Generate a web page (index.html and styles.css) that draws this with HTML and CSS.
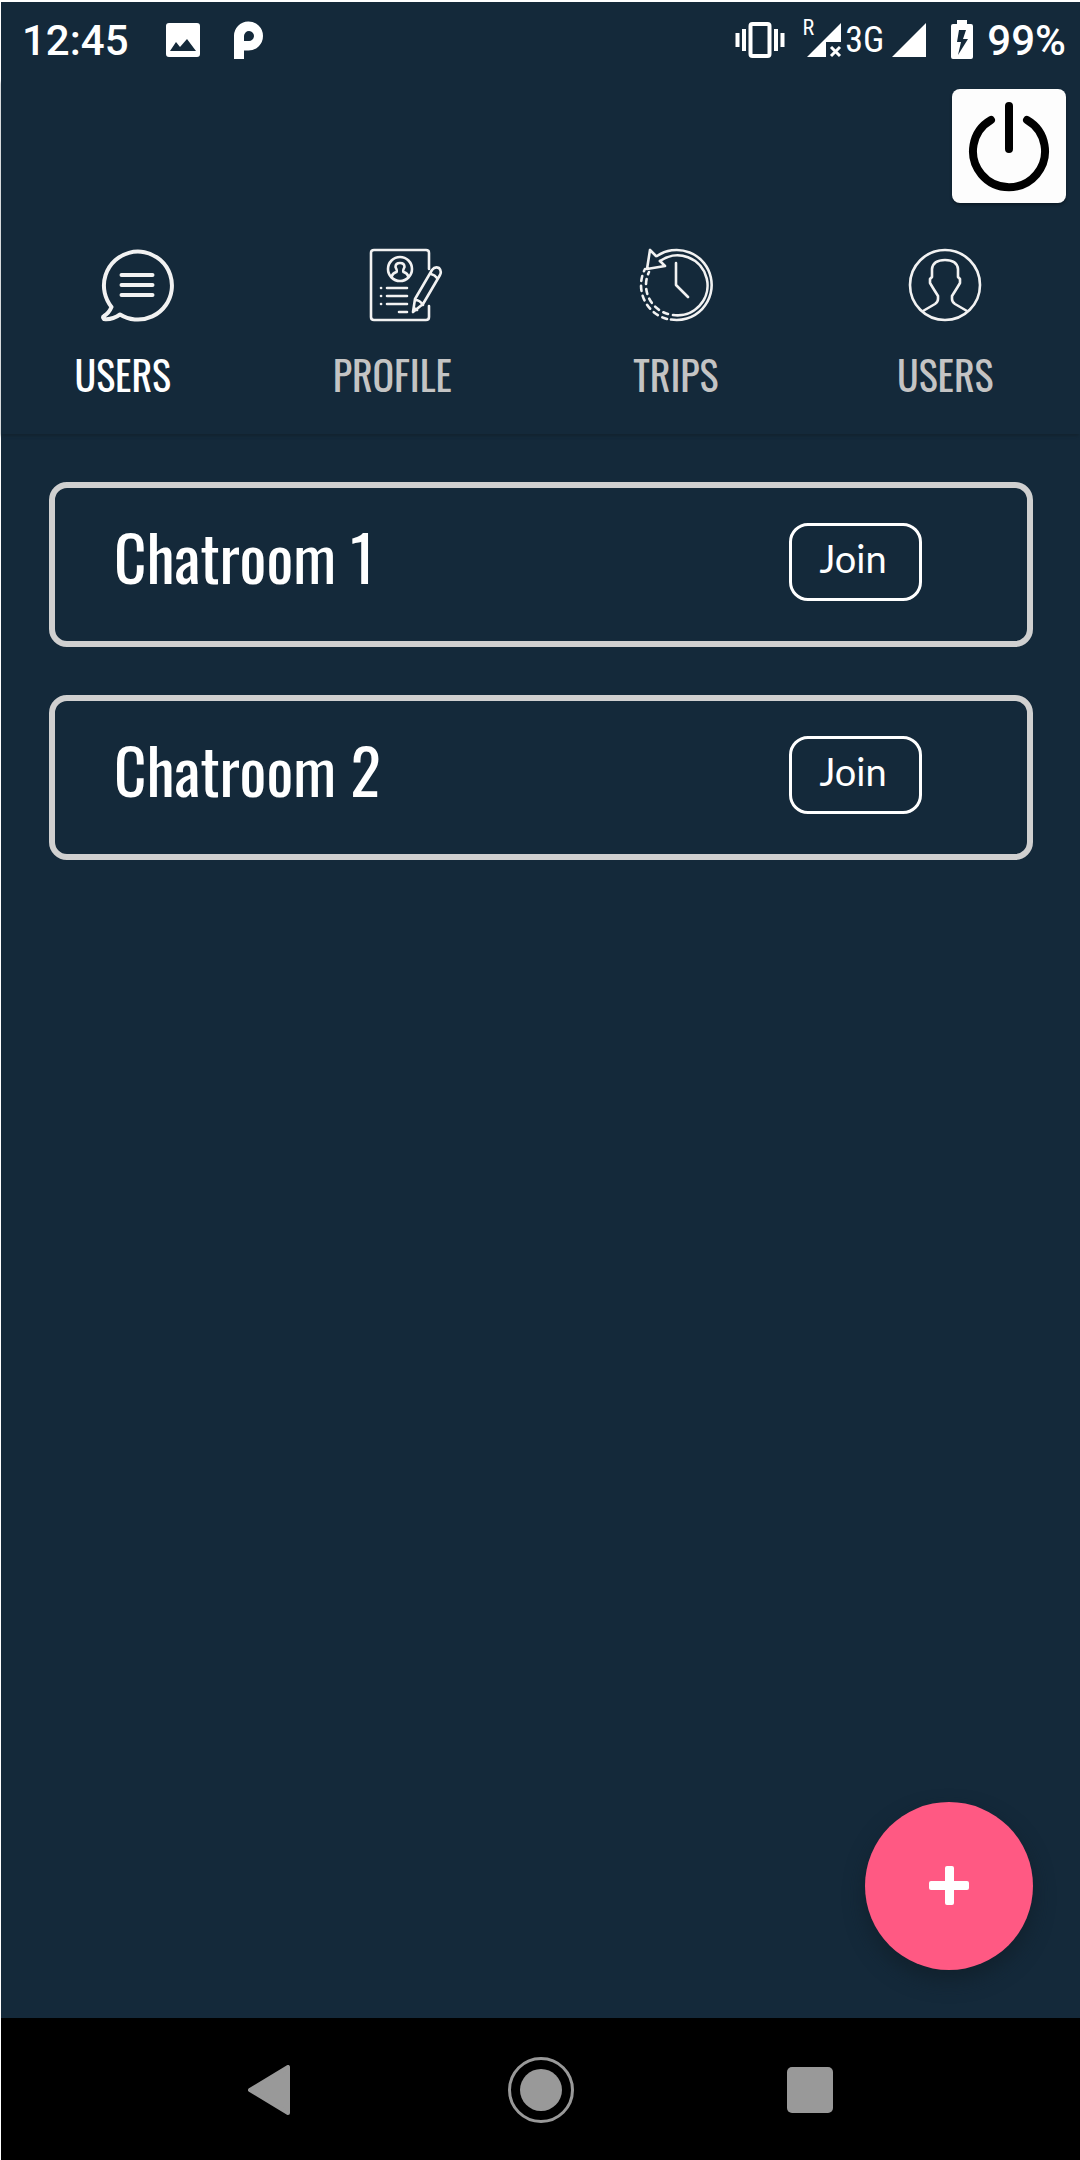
FILE: index.html
```html
<!DOCTYPE html>
<html lang="en">
<head>
<meta charset="utf-8">
<meta name="viewport" content="width=device-width, initial-scale=1">
<title>Chatrooms</title>
<link rel="stylesheet" href="styles.css">
</head>
<body>
<div class="screen">
  <div class="status">
    <div class="status-group">
      <span class="clock">12:45</span>
      <svg class="photo" width="36" height="36" viewBox="0 0 36 36"><path fill="#fff" fill-rule="evenodd" d="M4 1h28q3 0 3 3v28q0 3-3 3H4q-3 0-3-3V4q0-3 3-3zM5 29h26l-9-12-7 8-4-5z"/></svg>
      <svg class="pmark" width="30" height="38" viewBox="0 0 30 38"><path fill="#fff" fill-rule="evenodd" d="M0 38V15.500a14.500 14.500 0 1 1 14.500 14H10V38zM10 20h4.500a5 5 0 1 0-4.500-5z"/></svg>
    </div>
    <div class="status-group">
      <svg class="vibrate" width="50" height="38" viewBox="0 0 50 38"><rect x="15.500" y="3" width="19" height="32" rx="2" fill="none" stroke="#fff" stroke-width="4"/><path d="M9 8v22M41 8v22M2.500 12v14M47.500 12v14" stroke="#fff" stroke-width="4"/></svg>
      <span class="roaming">R</span>
      <svg class="signal-off" width="36" height="36" viewBox="0 0 36 36"><path fill="#fff" d="M1 35 35 1v19H20v15z"/><path d="m25 25 9 9m0-9-9 9" stroke="#fff" stroke-width="3"/></svg>
      <span class="network">3G</span>
      <svg class="signal" width="36" height="36" viewBox="0 0 36 36"><path fill="#fff" d="M1 35 35 1v34z"/></svg>
      <svg class="battery" width="22" height="40" viewBox="0 0 22 40"><path fill="#fff" fill-rule="evenodd" d="M6 0h10v4h4q2 0 2 2v31q0 2-2 2H2q-2 0-2-2V6q0-2 2-2h4zM8 10 6 22h4L7 35l10-16h-5l3-9z"/></svg>
      <span class="level">99%</span>
    </div>
  </div>

  <header class="header">
    <button class="power" type="button" aria-label="Log out"><svg width="82" height="92" viewBox="0 0 82 92"><path d="M23 20a36 36 0 1 0 36 0M41 6v43" fill="none" stroke="#000" stroke-width="8" stroke-linecap="round"/></svg></button>
    <nav class="tabs">
      <a class="tab shifted active" href="#chat">
        <svg class="tab-icon" width="74" height="74" viewBox="0 0 74 74" fill="none" stroke="#f2f2f2" stroke-width="4" stroke-linecap="round" stroke-linejoin="round"><path d="M11.500 59A34 34 0 1 1 20 66.500Q12 72 4 71q-2-2 0-3 5-3 7.500-9z"/><path d="M21.500 27h31M21.500 37h31M21.500 47h31"/></svg>
        <span>USERS</span>
      </a>
      <a class="tab shifted" href="#profile">
        <svg class="tab-icon" width="74" height="74" viewBox="0 0 74 74" fill="none" stroke="#f2f2f2" stroke-width="2.600" stroke-linecap="round" stroke-linejoin="round"><path d="M60 21V5q0-3-3-3H5Q2 2 2 5v64q0 3 3 3h52q3 0 3-3V58"/><circle cx="31" cy="21" r="12"/><path d="M22.500 29q1-4 5-5 1-1-1-5 0-4 4.500-4t4.500 4q-2 4-1 5 4 1 5 5"/><path d="M18 40h20M18 48h20M18 56h20M30 64h8M12 40h.1M12 48h.1M12 56h.1"/><path d="m44 64 2-13 17-29q3-4 7-2 3 3 1 7L54 56zM46 52q5 0 8 5M62 26q4 1 6 4M45 60l3 2"/></svg>
        <span>PROFILE</span>
      </a>
      <a class="tab" href="#trips">
        <svg class="tab-icon" width="74" height="74" viewBox="0 0 74 74" fill="none" stroke="#f2f2f2" stroke-width="2.600" stroke-linecap="round" stroke-linejoin="round"><path d="M18 8A35 35 0 1 1 32 71.500M21 13A30 30 0 1 1 34 67M37 15v22l12 12"/><path d="m17 8-6-6-3 19 18-3-5-5"/><path d="M28 71A35 35 0 0 1 6 21M29 66A30 30 0 0 1 10 24" stroke-dasharray="5 5"/></svg>
        <span>TRIPS</span>
      </a>
      <a class="tab" href="#users">
        <svg class="tab-icon" width="74" height="74" viewBox="0 0 74 74" fill="none" stroke="#f2f2f2" stroke-width="2.600" stroke-linejoin="round"><circle cx="37" cy="37" r="35"/><path d="m15 63 12-7q3-2 3-5v-3l-5-8-3-5v-4l2-2V21q1-9 13-9t13 9v8l2 2v4l-3 5-5 8v3q0 3 3 5l12 7"/></svg>
        <span>USERS</span>
      </a>
    </nav>
  </header>

  <main class="rooms">
    <section class="room">
      <h2 class="room-name">Chatroom 1</h2>
      <button class="join" type="button">Join</button>
    </section>
    <section class="room">
      <h2 class="room-name">Chatroom 2</h2>
      <button class="join" type="button">Join</button>
    </section>
  </main>

  <div class="actions">
    <button class="add" type="button" aria-label="Add chatroom"><svg width="40" height="40" viewBox="0 0 40 40"><path fill="#fff" d="M18 0h5q2 0 2 2v13h13q2 0 2 2v5q0 2-2 2H25v13q0 2-2 2h-5q-2 0-2-2V24H2q-2 0-2-2v-5q0-2 2-2h14V2q0-2 2-2z"/></svg></button>
  </div>

  <div class="softkeys">
    <button class="key" type="button" aria-label="Back"><svg width="46" height="50" viewBox="0 0 46 50"><path d="M40 2v46L2 25z" fill="#999" stroke="#999" stroke-width="4" stroke-linejoin="round"/></svg></button>
    <button class="key" type="button" aria-label="Home"><svg width="66" height="66" viewBox="0 0 66 66"><circle cx="33" cy="33" r="31.500" fill="none" stroke="#999" stroke-width="3"/><circle cx="33" cy="33" r="21" fill="#999"/></svg></button>
    <button class="key" type="button" aria-label="Recent apps"><svg width="46" height="46" viewBox="0 0 46 46"><rect width="46" height="46" rx="5" fill="#999"/></svg></button>
  </div>
</div>
</body>
</html>
```
FILE: styles.css
```css
* { box-sizing: border-box; }

body {
  margin: 0;
  background: #14293a;
  color: #fff;
  font-family: Roboto, sans-serif;
}

button {
  padding: 0;
  border: 0;
  background: none;
  color: inherit;
  cursor: pointer;
}

svg { display: block; flex: none; }

.screen {
  display: flex;
  flex-direction: column;
  min-height: 100vh;
  border-top: 2px solid #fff;
  border-left: 1px solid #fff;
}

/* Status bar */
.status {
  display: flex;
  justify-content: space-between;
  height: 76px;
  padding: 0 14px 0 21px;
}

.status-group { display: flex; align-items: center; }

.clock, .level {
  padding-top: 2px;
  font-size: 42px;
  font-weight: 500;
  line-height: 76px;
}

.photo { margin-left: 36px; }
.pmark { margin-left: 33px; }
.vibrate { margin-right: 18px; }

.roaming, .network {
  font-family: "Roboto Condensed", "Liberation Sans Narrow", Roboto, sans-serif;
}

.roaming {
  align-self: flex-start;
  margin: 12px -8px 0 0;
  font-size: 22px;
  line-height: 28px;
}

.network {
  margin: 0 7px 0 3px;
  font-size: 36px;
}

.battery { margin: 0 14px 0 24px; }

/* Header */
.header {
  padding-top: 11px;
  box-shadow: 0 3px 3px -1px #12232f;
}

.power {
  display: flex;
  align-items: center;
  justify-content: center;
  width: 114px;
  height: 114px;
  margin: 0 14px 0 auto;
  border-radius: 8px;
  background: #fdfdfd;
  box-shadow: 0 2px 3px #0c1b27;
}

.tabs {
  display: grid;
  grid-template-columns: repeat(4, 1fr);
  padding: 45px 0 0 1px;
}

.tab {
  display: flex;
  flex-direction: column;
  align-items: center;
  height: 186px;
  color: #c4c4c4;
  font-family: Oswald, "Liberation Sans Narrow", sans-serif;
  font-size: 40px;
  font-weight: 400;
  line-height: 60px;
  text-decoration: none;
}

.tab span { padding-top: 22px; }
.shifted span { padding-right: 28px; }
.active { color: #fff; }

/* Chatroom list */
.rooms {
  display: flex;
  flex-direction: column;
  flex: 1;
  gap: 48px;
  padding: 48px 47px 0 48px;
}

.room {
  display: flex;
  align-items: flex-start;
  justify-content: space-between;
  height: 165px;
  padding: 35px 105px 0 59px;
  border: 6px solid #d0d0d0;
  border-radius: 18px;
}

.room-name {
  margin: 0;
  font-family: Oswald, "Liberation Sans Narrow", sans-serif;
  font-size: 63px;
  font-weight: 400;
  line-height: 66px;
}

.join {
  width: 133px;
  height: 78px;
  padding: 0 5px 8px 0;
  border: 3px solid #fff;
  border-radius: 19px;
  font-family: Lato, sans-serif;
  font-size: 38px;
}

.actions {
  display: flex;
  justify-content: flex-end;
  padding: 0 47px 48px;
}

.add {
  display: flex;
  align-items: center;
  justify-content: center;
  width: 168px;
  height: 168px;
  border-radius: 50%;
  background: #ff5983;
  box-shadow: 0 10px 20px #11212d;
}

/* System navigation */
.softkeys {
  display: flex;
  justify-content: center;
  height: 142px;
  padding-top: 2px;
  background: #000;
}

.key {
  display: flex;
  align-items: center;
  justify-content: center;
  width: 25%;
}
```
